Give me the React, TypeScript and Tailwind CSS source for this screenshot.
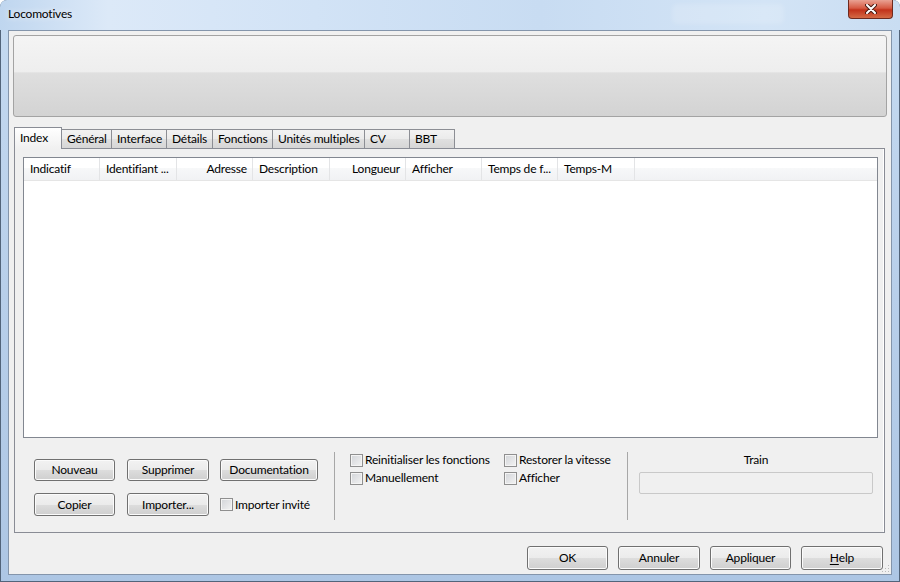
import React from "react";

const btn =
  "flex items-center justify-center rounded-[3px] border border-[#707070] bg-[linear-gradient(to_bottom,#f2f2f2,#ebebeb_50%,#dddddd_50%,#cfcfcf)] shadow-[inset_0_0_0_1px_#fbfbfb] text-[12px] text-black";

const tabs = [
  { label: "Index", w: "w-[48px]" },
  { label: "Général", w: "w-[51px]" },
  { label: "Interface", w: "w-[56px]" },
  { label: "Détails", w: "w-[47px]" },
  { label: "Fonctions", w: "w-[61px]" },
  { label: "Unités multiples", w: "w-[93px]" },
  { label: "CV", w: "w-[46px]" },
  { label: "BBT", w: "w-[46px]" },
];

const columns = [
  { label: "Indicatif", w: "w-[76px]", right: false },
  { label: "Identifiant ...", w: "w-[77px]", right: false },
  { label: "Adresse", w: "w-[76px]", right: true },
  { label: "Description", w: "w-[77px]", right: false },
  { label: "Longueur", w: "w-[76px]", right: true },
  { label: "Afficher", w: "w-[76px]", right: false },
  { label: "Temps de f...", w: "w-[76px]", right: false },
  { label: "Temps-M", w: "w-[77px]", right: false },
];

function Check({ label }: { label: string }) {
  return (
    <div className="flex h-[18px] items-center">
      <span className="h-[13px] w-[13px] shrink-0 border border-[#8f8f8f] bg-[linear-gradient(135deg,#d2d4d8,#f3f3f3)] shadow-[inset_0_0_0_1px_#f4f4f4]" />
      <span className="ml-[2px] whitespace-nowrap text-[12px]">{label}</span>
    </div>
  );
}

export default function App() {
  return (
    <div className="relative h-[582px] w-[900px] overflow-hidden rounded-t-[7px] bg-[linear-gradient(to_bottom,#c5daf1,#b8cfea_50%,#adc6e4)] font-['Lato',sans-serif] tracking-[-0.2px] text-black shadow-[inset_0_0_0_1px_#52647a]">
      {/* title bar */}
      <div className="flex h-[30px] items-center bg-[linear-gradient(to_right,#bfd6ef,#dce9f8_12%,#d2e3f6_35%,#c8dcf2_60%,#d3e4f6_85%,#c9ddf2)] pb-[2px] pl-[8px]">
        <span className="text-[12px] [text-shadow:0_0_6px_#ffffff]">Locomotives</span>
      </div>
      <div className="absolute left-[672px] top-[4px] h-[20px] w-[112px] rounded-[5px] bg-white/15 blur-[2px]" />
      <div className="absolute right-[7px] top-0 flex h-[19px] w-[45px] items-center justify-center rounded-b-[4px] border border-t-0 border-[#6e2a1f] bg-[linear-gradient(to_bottom,#e9a293,#d65a43_45%,#c2321b_55%,#d46a45)]">
        <svg width="12" height="10" viewBox="0 0 12 10">
          <path d="M2 1 L10 9 M10 1 L2 9" stroke="#4a1a12" strokeWidth="4" strokeLinecap="round" />
          <path d="M2 1 L10 9 M10 1 L2 9" stroke="#ffffff" strokeWidth="2" strokeLinecap="round" />
        </svg>
      </div>

      {/* client area */}
      <div className="relative mx-[8px] flex h-[545px] flex-col border border-[#8495ab] bg-[#f0f0f0]">
        <div className="mx-[4px] mt-[4px] h-[82px] rounded-[3px] border border-[#a3a3a3] bg-[linear-gradient(to_bottom,#f4f4f4,#eeeeee_45%,#dfdfdf_46%,#d3d3d3)]" />

        <div className="ml-[5px] mr-[6px] mt-[10px]">
          <div className="relative z-10 flex h-[21px] items-end">
            {tabs.map((t, i) =>
              i === 0 ? (
                <div
                  key={t.label}
                  className={`${t.w} relative z-10 -mb-px flex h-[22px] items-start border border-b-0 border-[#898c95] bg-[linear-gradient(to_bottom,#ffffff,#f6f6f6_60%,#f0f0f0)] pl-[5px] pt-[1px] text-[12px]`}
                >
                  {t.label}
                </div>
              ) : (
                <div
                  key={t.label}
                  className={`${t.w} -ml-px flex h-[19px] items-center border border-b-0 border-[#8c8e94] bg-[linear-gradient(to_bottom,#f2f2f2,#ebebeb_50%,#e0e0e0_50%,#d6d6d6)] pl-[5px] text-[12px]`}
                >
                  {t.label}
                </div>
              ),
            )}
          </div>

          <div className="flex h-[385px] flex-col border border-[#898c95] bg-[#f0f0f0] shadow-[inset_-1px_0_0_#ffffff]">
            <div className="ml-[8px] mt-[8px] flex h-[281px] w-[855px] flex-col border border-[#828790] bg-white">
              <div className="flex h-[23px] border-b border-[#e5e5e5] bg-[linear-gradient(to_bottom,#ffffff,#ffffff_45%,#f7f8f9_46%,#f1f2f4)]">
                {columns.map((c) => (
                  <div
                    key={c.label}
                    className={`${c.w} flex items-center border-r border-[#e3e4e6] text-[12px] ${
                      c.right ? "justify-end pr-[5px]" : "pl-[6px]"
                    }`}
                  >
                    {c.label}
                  </div>
                ))}
              </div>
            </div>

            <div className="flex items-start pl-[19px] pt-[13px]">
              <div className="pt-[8px]">
                <div className="flex">
                  <div className={`${btn} h-[22px] w-[81px]`}>Nouveau</div>
                  <div className={`${btn} ml-[12px] h-[22px] w-[82px]`}>Supprimer</div>
                  <div className={`${btn} ml-[11px] h-[22px] w-[98px]`}>Documentation</div>
                </div>
                <div className="mt-[12px] flex items-center">
                  <div className={`${btn} h-[23px] w-[81px]`}>Copier</div>
                  <div className={`${btn} ml-[12px] h-[23px] w-[82px]`}>Importer...</div>
                  <div className="ml-[11px]">
                    <Check label="Importer invité" />
                  </div>
                </div>
              </div>

              <div className="ml-[16px] mt-[1px] h-[68px] w-px bg-[#a7a7a7]" />

              <div className="flex w-[292px] pl-[15px]">
                <div className="w-[154px]">
                  <Check label="Reinitialiser les fonctions" />
                  <Check label="Manuellement" />
                </div>
                <div>
                  <Check label="Restorer la vitesse" />
                  <Check label="Afficher" />
                </div>
              </div>

              <div className="mt-[1px] h-[68px] w-px bg-[#a7a7a7]" />

              <div className="ml-[11px] w-[234px]">
                <div className="flex h-[18px] items-center justify-center text-[12px]">Train</div>
                <div className="mt-[3px] h-[22px] rounded-[2px] border border-[#c9c9c9] bg-[#f0f0f0]" />
              </div>
            </div>
          </div>
        </div>

        <div className="mt-[13px] flex justify-end gap-[10px] pr-[8px]">
          <div className={`${btn} h-[24px] w-[81px]`}>OK</div>
          <div className={`${btn} h-[24px] w-[82px]`}>Annuler</div>
          <div className={`${btn} h-[24px] w-[81px]`}>Appliquer</div>
          <div className={`${btn} h-[24px] w-[82px]`}>
            <span className="underline underline-offset-2">H</span>elp
          </div>
        </div>

        <svg className="absolute bottom-[1px] right-[1px]" width="8" height="8" viewBox="0 0 8 8">
          <g fill="#b9b9b9">
            <rect x="6" y="0" width="1" height="1" />
            <rect x="3" y="3" width="1" height="1" />
            <rect x="6" y="3" width="1" height="1" />
            <rect x="0" y="6" width="1" height="1" />
            <rect x="3" y="6" width="1" height="1" />
            <rect x="6" y="6" width="1" height="1" />
          </g>
        </svg>
      </div>
    </div>
  );
}
